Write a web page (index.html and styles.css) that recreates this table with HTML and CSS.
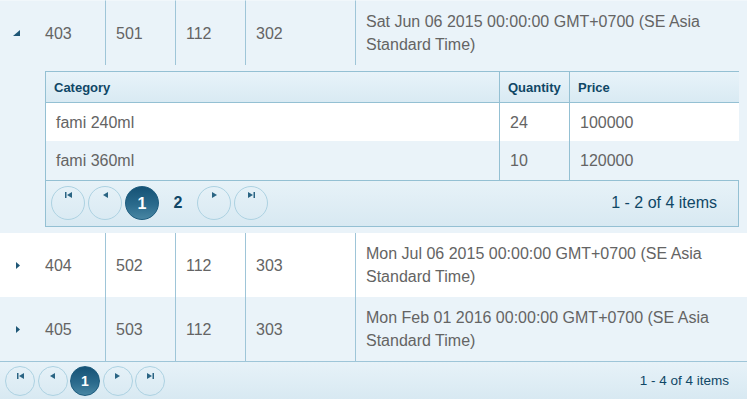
FILE: index.html
```html
<!DOCTYPE html>
<html>
<head>
<meta charset="utf-8">
<link rel="stylesheet" href="styles.css">
</head>
<body>
<div class="grid">
  <table class="main">
    <colgroup>
      <col class="w-h"><col class="w-a"><col class="w-b"><col class="w-c"><col class="w-d"><col class="w-e">
    </colgroup>
    <tbody>
      <tr class="row alt first">
        <td class="hier"><svg class="ico-exp" width="7" height="6" viewBox="0 0 7 6"><polygon points="7,0 7,6 0,6"/></svg></td>
        <td>403</td>
        <td class="sep">501</td>
        <td class="sep">112</td>
        <td class="sep">302</td>
        <td class="sep">Sat Jun 06 2015 00:00:00 GMT+0700 (SE Asia Standard Time)</td>
      </tr>
      <tr class="detail alt">
        <td class="hier"></td>
        <td class="detail-cell" colspan="5">
          <div class="sub">
            <table class="subtable">
              <colgroup><col class="s-cat"><col class="s-qty"><col class="s-price"></colgroup>
              <thead>
                <tr><th>Category</th><th class="ssep">Quantity</th><th class="ssep">Price</th></tr>
              </thead>
              <tbody>
                <tr class="srow r1"><td>fami 240ml</td><td class="ssep">24</td><td class="ssep">100000</td></tr>
                <tr class="srow r2 salt"><td>fami 360ml</td><td class="ssep">10</td><td class="ssep">120000</td></tr>
              </tbody>
            </table>
            <div class="pager">
              <span class="pbtn"><svg class="pi" width="7" height="6" viewBox="0 0 7 6"><rect x="0" y="0" width="1.5" height="6"/><polygon points="7,0 2,3 7,6"/></svg></span>
              <span class="pbtn"><svg class="pi" width="5" height="6" viewBox="0 0 5 6"><polygon points="5,0 0,3 5,6"/></svg></span>
              <span class="pbtn sel">1</span>
              <span class="pnum">2</span>
              <span class="pbtn"><svg class="pi" width="5" height="6" viewBox="0 0 5 6"><polygon points="0,0 5,3 0,6"/></svg></span>
              <span class="pbtn"><svg class="pi" width="7" height="6" viewBox="0 0 7 6"><polygon points="0,0 5,3 0,6"/><rect x="5.5" y="0" width="1.5" height="6"/></svg></span>
              <span class="pinfo">1 - 2 of 4 items</span>
            </div>
          </div>
        </td>
      </tr>
      <tr class="row">
        <td class="hier"><svg class="ico-col" width="4" height="7" viewBox="0 0 4 7"><polygon points="0,0 4,3.5 0,7"/></svg></td>
        <td>404</td>
        <td class="sep">502</td>
        <td class="sep">112</td>
        <td class="sep">303</td>
        <td class="sep">Mon Jul 06 2015 00:00:00 GMT+0700 (SE Asia Standard Time)</td>
      </tr>
      <tr class="row alt">
        <td class="hier"><svg class="ico-col" width="4" height="7" viewBox="0 0 4 7"><polygon points="0,0 4,3.5 0,7"/></svg></td>
        <td>405</td>
        <td class="sep">503</td>
        <td class="sep">112</td>
        <td class="sep">303</td>
        <td class="sep">Mon Feb 01 2016 00:00:00 GMT+0700 (SE Asia Standard Time)</td>
      </tr>
    </tbody>
  </table>
  <div class="mpager">
    <span class="mbtn"><svg class="pi" width="7" height="6" viewBox="0 0 7 6"><rect x="0" y="0" width="1.5" height="6"/><polygon points="7,0 2,3 7,6"/></svg></span>
    <span class="mbtn"><svg class="pi" width="5" height="6" viewBox="0 0 5 6"><polygon points="5,0 0,3 5,6"/></svg></span>
    <span class="mbtn sel">1</span>
    <span class="mbtn"><svg class="pi" width="5" height="6" viewBox="0 0 5 6"><polygon points="0,0 5,3 0,6"/></svg></span>
    <span class="mbtn"><svg class="pi" width="7" height="6" viewBox="0 0 7 6"><polygon points="0,0 5,3 0,6"/><rect x="5.5" y="0" width="1.5" height="6"/></svg></span>
    <span class="minfo">1 - 4 of 4 items</span>
  </div>
</div>
</body>
</html>
```

FILE: styles.css
```css
body {
  margin: 0;
  background: #ffffff;
  font-family: "Liberation Sans", Arial, sans-serif;
}

.grid {
  width: 747px;
}

.main {
  width: 747px;
  table-layout: fixed;
  border-collapse: separate;
  border-spacing: 0;
}

.w-h { width: 35px; }
.w-a { width: 70px; }
.w-b { width: 70px; }
.w-c { width: 70px; }
.w-d { width: 110px; }
.w-e { width: 392px; }

.main td {
  padding: 9px 10px;
  font-size: 16px;
  line-height: 23px;
  color: #646464;
  vertical-align: middle;
  background: #ffffff;
}

.main .alt > td {
  background: #eaf3f9;
}

.main .first > td {
  border-top: 1px solid #f1f7fb;
}

.main td.sep {
  border-left: 1px solid #9ec5d8;
}

.main td.hier {
  padding: 0;
  text-align: center;
}

.hier svg {
  display: block;
  margin: 0 auto;
  fill: #1e5676;
}

.ico-exp {
  position: relative;
  left: -1px;
}

.main td.detail-cell {
  padding: 6px 8px 6px 10px;
}

.sub {
  border: 1px solid #94c0d3;
  background: #ffffff;
}

.subtable {
  width: 100%;
  table-layout: fixed;
  border-collapse: separate;
  border-spacing: 0;
}

.s-cat { width: 453px; }
.s-qty { width: 70px; }
.s-price { width: 170px; }

.subtable th {
  height: 30px;
  padding: 0 8px;
  text-align: left;
  font-size: 13px;
  font-weight: bold;
  color: #0f4766;
  background: linear-gradient(to bottom, #e8f3f9, #d9eaf3);
  border-bottom: 1px solid #94c0d3;
}

.subtable .ssep {
  border-left: 1px solid #94c0d3;
}

.subtable td {
  padding: 0 10px;
  font-size: 16px;
  color: #646464;
  background: #ffffff;
}

.srow.r1 td { height: 38px; }
.srow.r2 td { height: 39px; }

.srow.salt td {
  background: #eaf3f9;
}

.pager {
  display: flex;
  align-items: flex-start;
  height: 40px;
  padding: 5px 21px 0 5px;
  border-top: 1px solid #94c0d3;
  background: linear-gradient(to bottom, #e7f2f8, #d8e9f2);
}

.pbtn {
  box-sizing: border-box;
  width: 34px;
  height: 34px;
  margin-right: 3px;
  border: 1px solid #add2e2;
  border-radius: 50%;
  display: flex;
  justify-content: center;
  align-items: flex-start;
  padding-top: 5px;
}

.pi {
  display: block;
  fill: #2a6483;
}

.pbtn.sel,
.mbtn.sel {
  align-items: center;
  padding-top: 0;
  border-color: #1d5c7e;
  background: linear-gradient(to bottom, #155275 0%, #2a6a8c 55%, #4886a3 100%);
  color: #ffffff;
  font-weight: bold;
}

.pbtn.sel {
  font-size: 16px;
}

.pnum {
  width: 32px;
  margin-right: 3px;
  height: 34px;
  line-height: 34px;
  text-align: center;
  font-size: 16px;
  font-weight: bold;
  color: #0f4766;
}

.pinfo {
  margin-left: auto;
  line-height: 34px;
  font-size: 16px;
  color: #0f4766;
}

.mpager {
  display: flex;
  align-items: flex-start;
  height: 33px;
  padding: 4px 18px 0 5px;
  border-top: 1px solid #9ec5d8;
  background: linear-gradient(to bottom, #e7f2f8, #d8e9f2);
}

.mbtn {
  box-sizing: border-box;
  width: 30px;
  height: 30px;
  margin-right: 2.5px;
  border: 1px solid #add2e2;
  border-radius: 50%;
  display: flex;
  justify-content: center;
  align-items: flex-start;
  padding-top: 6px;
}

.mbtn.sel {
  font-size: 14px;
}

.minfo {
  margin-left: auto;
  line-height: 30px;
  font-size: 13.5px;
  color: #0f4766;
}
```
